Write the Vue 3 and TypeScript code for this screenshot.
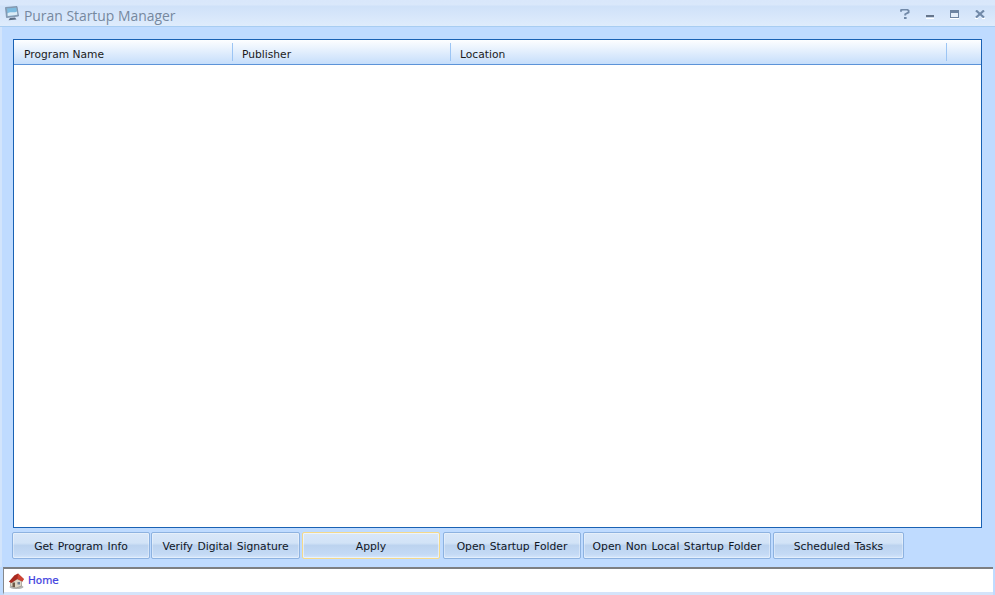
<script setup lang="ts">
interface Btn { label: string; width: number; gap: number; active?: boolean }
const columns = [
  { label: 'Program Name', width: 218 },
  { label: 'Publisher', width: 218 },
  { label: 'Location', width: 496 },
  { label: '', width: 34 },
]
const buttons: Btn[] = [
  { label: 'Get Program Info', width: 138, gap: 1 },
  { label: 'Verify Digital Signature', width: 149, gap: 2 },
  { label: 'Apply', width: 138, gap: 3, active: true },
  { label: 'Open Startup Folder', width: 138, gap: 2 },
  { label: 'Open Non Local Startup Folder', width: 188, gap: 2 },
  { label: 'Scheduled Tasks', width: 131, gap: 0 },
]
</script>

<template>
  <div class="window">
    <header class="titlebar">
      <svg class="app-icon" width="14" height="15" viewBox="0 0 14 15">
        <path d="M.5 1.5 12 .5 13.5 10 1.5 11.5Z" fill="#8ea3ba" stroke="#6d859f" stroke-width=".7" />
        <path d="M2 2.6 11.2 1.8 12.3 8.8 2.8 10Z" fill="#7cbbe0" />
        <path d="M2.5 7.5C5.5 5 8.5 7.5 12 5.5L12.3 8.8 2.8 10Z" fill="#dcecf6" />
        <path d="M5 12 10 11.5 11.5 13.6 3.5 14.3Z" fill="#5d6f85" />
      </svg>
      <span class="title">Puran Startup Manager</span>
      <div class="controls">
        <svg class="ctl" width="10" height="10" viewBox="0 0 10 10" fill="none">
          <path d="M1 2.8V1.2L2.4.6H7.2L8.6 1.6V3.4L5.2 5.2V6.6" stroke="#7189a8" stroke-width="1.8" />
          <path d="M4 8H6.6V10H4Z" fill="#7189a8" />
        </svg>
        <svg class="ctl" width="8" height="4" viewBox="0 0 8 4">
          <rect y="0" width="8" height="2.2" fill="#66768c" />
          <rect y="2.8" width="8" height="1.2" fill="#fff" />
        </svg>
        <svg class="ctl" width="9" height="9" viewBox="0 0 9 9" fill="none">
          <rect x=".5" y=".5" width="8" height="7" fill="#e4eefa" stroke="#6d84a2" />
          <rect x="0" y="0" width="9" height="3" fill="#6d84a2" />
          <rect x="0" y="8" width="9" height="1" fill="#fff" />
        </svg>
        <svg class="ctl" width="10" height="9" viewBox="0 0 10 9" fill="none">
          <path d="M1 .5 9 7.5M9 .5 1 7.5" stroke="#7189a8" stroke-width="2.2" />
          <path d="M0 8.5H3M7 8.5H10" stroke="#fff" />
        </svg>
      </div>
    </header>

    <main class="content">
      <section class="list">
        <div class="list-header">
          <div
            v-for="c in columns"
            :key="c.label"
            class="col"
            :style="{ width: c.width + 'px' }"
          >{{ c.label }}</div>
        </div>
        <div class="list-body"></div>
      </section>

      <div class="actions">
        <button
          v-for="b in buttons"
          :key="b.label"
          class="btn"
          :class="{ active: b.active }"
          :style="{ width: b.width + 'px', marginRight: b.gap + 'px' }"
        >{{ b.label }}</button>
      </div>
    </main>

    <footer class="status">
      <svg class="home-icon" width="17" height="18" viewBox="0 0 17 17">
        <ellipse cx="8.5" cy="14.5" rx="7" ry="2" fill="#b4b4b4" />
        <path d="M2.5 8.5 8 6 13.5 8.5V13.5L8 15.5 2.5 13.5Z" fill="#ded6c6" stroke="#8f8a80" stroke-width=".6" />
        <path d="M.8 9.2 6.5 2.8 10 1 15.8 6.5 14.5 9 9.5 6.5 3.5 10.5Z" fill="#a82a20" />
        <path d="M10 1 15.8 6.5 14.5 9 9.5 6.5Z" fill="#cf4434" />
        <rect x="4.5" y="10" width="2.5" height="4.5" fill="#6e5a48" />
        <rect x="9.5" y="9.5" width="2.5" height="2.5" fill="#6e7d90" />
      </svg>
      <span class="home">Home</span>
    </footer>
  </div>
</template>

<style>
html, body { margin: 0; padding: 0; background: #bfdbff; }
</style>

<style scoped>
.window {
  width: 995px;
  height: 595px;
  display: flex;
  flex-direction: column;
  background: #bfdbff;
  font-family: "DejaVu Sans", sans-serif;
  overflow: hidden;
}
.titlebar {
  height: 27px;
  flex: none;
  box-sizing: border-box;
  display: flex;
  align-items: center;
  padding: 0 10px 0 5px;
  background: linear-gradient(#d9e7fb 0, #dae8fb 5px, #cfe1f9 6px, #dfecfc 100%);
  border-bottom: 1px solid #a8cdf2;
}
.app-icon { flex: none; }
.title {
  margin-left: 5px;
  margin-top: 4px;
  font-family: "Open Sans", sans-serif;
  font-size: 13.9px;
  color: #76889f;
}
.controls {
  margin-left: auto;
  display: flex;
  align-items: flex-end;
  gap: 16px;
  height: 10px;
  margin-top: 2px;
}
.content {
  flex: 1;
  min-height: 0;
  display: flex;
  flex-direction: column;
  padding: 12px 13px 0 10px;
  border-left: 2px solid #d2e4fb;
  box-sizing: border-box;
}
.list {
  margin-left: 1px;
  width: 969px;
  height: 489px;
  box-sizing: border-box;
  border: 1px solid #1a62b4;
  background: #fff;
  display: flex;
  flex-direction: column;
}
.list-header {
  height: 25px;
  flex: none;
  display: flex;
  box-sizing: border-box;
  padding-left: 1px;
  border-bottom: 1px solid #5c93d8;
  background: linear-gradient(#fdfeff, #c6defb);
}
.col {
  box-sizing: border-box;
  padding-left: 9px;
  font-family: "DejaVu Sans", sans-serif;
  font-size: 10.7px;
  line-height: 29px;
  color: #1a1a1a;
  position: relative;
}
.col:not(:last-child)::after {
  content: "";
  position: absolute;
  right: 0;
  top: 3px;
  bottom: 3px;
  width: 1px;
  background: #9cc5f4;
}
.list-body { flex: 1; }
.actions {
  display: flex;
  margin-top: 4px;
}
.btn {
  height: 27px;
  flex: none;
  box-sizing: border-box;
  border: 1px solid #8db2e0;
  border-radius: 2px;
  padding: 2px 0 0;
  font-family: "DejaVu Sans", sans-serif;
  font-size: 10.75px;
  word-spacing: 1px;
  color: #10161f;
  background: linear-gradient(#d9e7f8 0, #d2e3f7 40%, #bcd3ef 50%, #c4daf5 85%, #d6e7fb 100%);
  box-shadow: inset 0 0 0 1px rgba(255, 255, 255, .35);
}
.btn.active {
  border-color: #f4d98a;
  box-shadow: inset 0 0 0 1px rgba(255, 255, 255, .5);
}
.status {
  flex: none;
  height: 28px;
  margin: 0 2px 0 3px;
  box-sizing: border-box;
  border-top: 2px solid #7d7f82;
  border-left: 1px solid #85888c;
  border-bottom: 3px solid #d4e4fa;
  background: #fff;
  display: flex;
  align-items: center;
  padding-left: 4px;
}
.home-icon { flex: none; }
.home {
  margin-left: 3px;
  margin-top: -2px;
  font-family: "DejaVu Sans", sans-serif;
  font-size: 10.4px;
  color: #3d3dde;
  -webkit-text-stroke: 0.2px #3d3dde;
}
</style>
